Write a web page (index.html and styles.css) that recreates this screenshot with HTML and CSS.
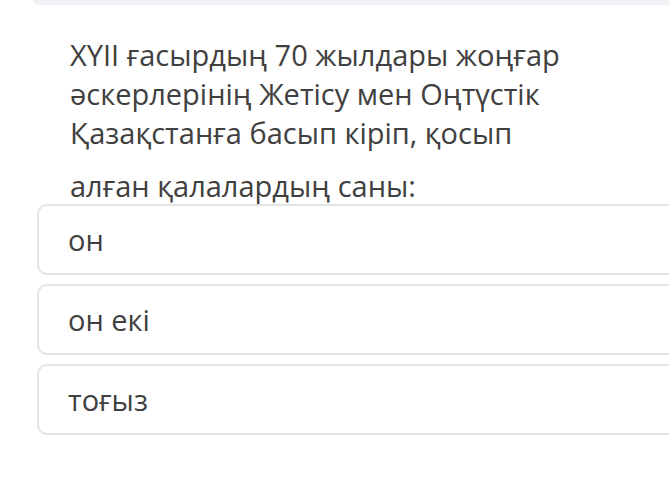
FILE: index.html
```html
<!DOCTYPE html>
<html lang="kk">
<head>
<meta charset="utf-8">
<link rel="stylesheet" href="styles.css">
</head>
<body>
<div class="topbar"></div>
<div class="question">
  <p class="q-text">XYII ғасырдың 70 жылдары жоңғар әскерлерінің Жетісу мен Оңтүстік Қазақстанға басып кіріп, қосып</p>
  <p class="q-tail">алған қалалардың саны:</p>
</div>
<div class="options">
  <div class="option">он</div>
  <div class="option">он екі</div>
  <div class="option">тоғыз</div>
</div>
</body>
</html>
```
FILE: styles.css
```css
html, body {
  margin: 0;
  padding: 0;
  background: #ffffff;
  overflow: hidden;
}
body {
  width: 669px;
  height: 484px;
  font-family: "Open Sans", "Noto Sans", sans-serif;
  color: #404040;
}
.topbar {
  margin-left: 33px;
  width: 660px;
  height: 5px;
  background: #f2f2f6;
  border-bottom-left-radius: 6px;
}
.question {
  padding-left: 70px;
  padding-right: 60px;
  padding-top: 30px;
}
.q-text {
  margin: 0;
  font-size: 29px;
  line-height: 39px;
  width: 530px;
}
.q-tail {
  margin: 14px 0 0 0;
  font-size: 29px;
  line-height: 39px;
}
.options {
  display: flex;
  flex-direction: column;
  gap: 9px;
  margin-top: -1px;
  margin-left: 37px;
}
.option {
  width: 660px;
  box-sizing: border-box;
  height: 71px;
  border: 2px solid #e3e5e5;
  border-radius: 10px;
  padding-left: 29px;
  display: flex;
  align-items: center;
  font-size: 29px;
}
```
